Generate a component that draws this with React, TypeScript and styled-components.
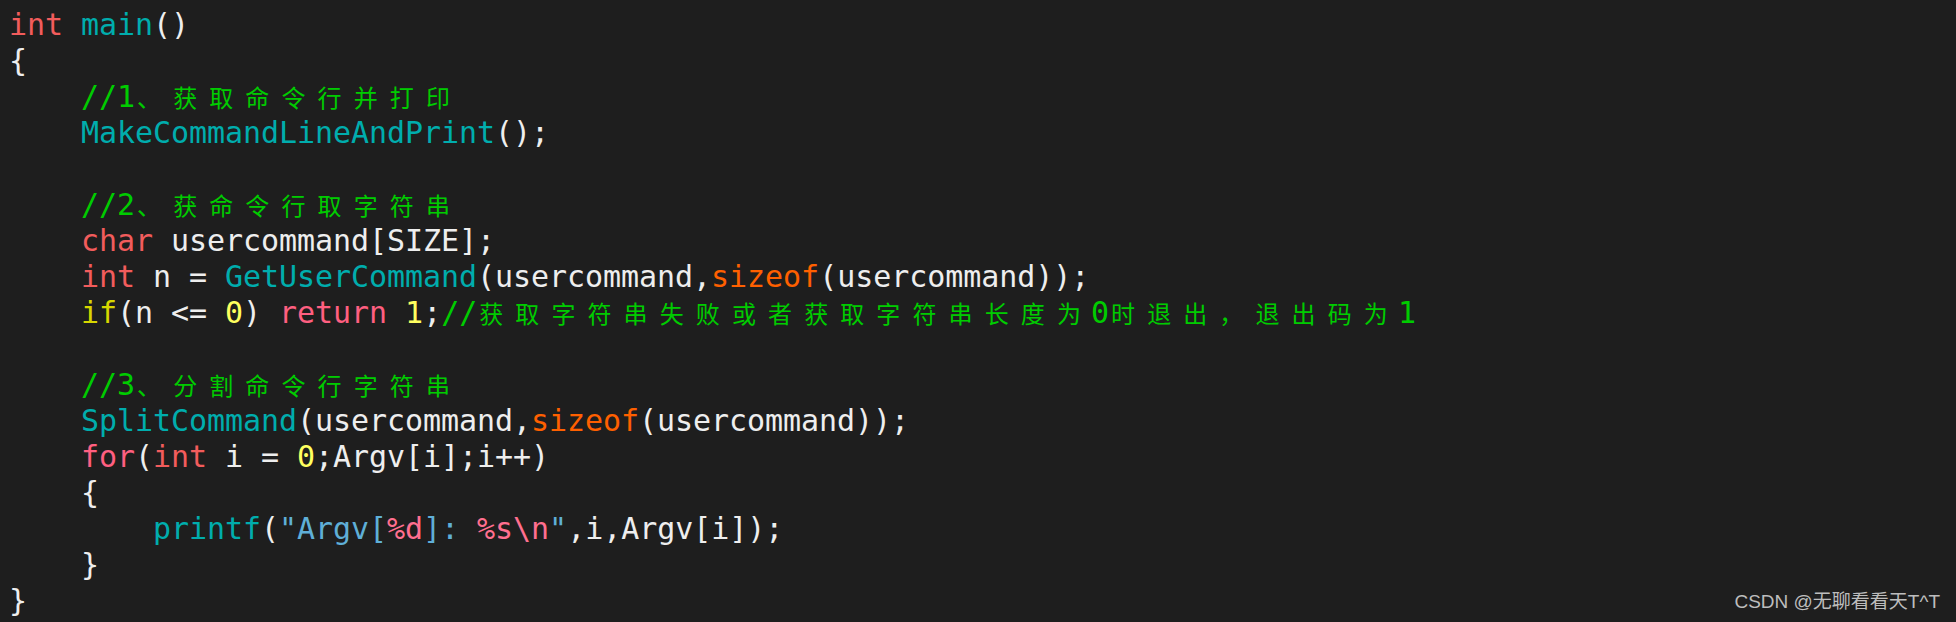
import React from "react";
import styled, { createGlobalStyle } from "styled-components";

const GlobalStyle = createGlobalStyle`
  html, body {
    margin: 0;
    padding: 0;
    background: #1e1e1e;
  }
`;

type Tone =
  | "kw"
  | "fn"
  | "tx"
  | "ctl"
  | "num"
  | "ret"
  | "op"
  | "cm"
  | "str"
  | "fmt";

const palette: Record<Tone, string> = {
  kw: "#f25c5c",
  fn: "#00adad",
  tx: "#eeeeee",
  ctl: "#d7d700",
  num: "#ffff5f",
  ret: "#ff5f80",
  op: "#ff6000",
  cm: "#00cc00",
  str: "#5fafd7",
  fmt: "#ff6f8f",
};

const Page = styled.div`
  position: relative;
  width: 1956px;
  height: 622px;
  overflow: hidden;
  background: #1e1e1e;
`;

const Code = styled.div`
  padding: 7px 0 0 9px;
  font-family: "DejaVu Sans Mono", "Noto Sans CJK SC", monospace;
  font-size: 30px;
  letter-spacing: -0.06px;
  white-space: pre;
`;

const Line = styled.div`
  height: 36px;
  line-height: 36px;
`;

const Token = styled.span<{ $tone: Tone }>`
  color: ${(p) => palette[p.$tone]};
`;

const Wide = styled.span`
  display: inline-block;
  width: 36.12px;
  box-sizing: border-box;
  padding-left: 2px;
  font-family: "Noto Sans CJK SC", sans-serif;
  font-size: 24px;
  letter-spacing: 0;
  vertical-align: baseline;
`;

const Watermark = styled.div`
  position: absolute;
  right: 16px;
  bottom: 10px;
  height: 20px;
  line-height: 20px;
  font-family: "Liberation Sans", "Noto Sans CJK SC", sans-serif;
  font-size: 19px;
  color: #bdbdbd;
`;

type Seg = [Tone, string];

const lines: Seg[][] = [
  [["kw", "int"], ["tx", " "], ["fn", "main"], ["tx", "()"]],
  [["tx", "{"]],
  [["tx", "    "], ["cm", "//1、获取命令行并打印"]],
  [["tx", "    "], ["fn", "MakeCommandLineAndPrint"], ["tx", "();"]],
  [],
  [["tx", "    "], ["cm", "//2、获命令行取字符串"]],
  [["tx", "    "], ["kw", "char"], ["tx", " usercommand[SIZE];"]],
  [
    ["tx", "    "],
    ["kw", "int"],
    ["tx", " n = "],
    ["fn", "GetUserCommand"],
    ["tx", "(usercommand,"],
    ["op", "sizeof"],
    ["tx", "(usercommand));"],
  ],
  [
    ["tx", "    "],
    ["ctl", "if"],
    ["tx", "(n <= "],
    ["num", "0"],
    ["tx", ") "],
    ["ret", "return"],
    ["tx", " "],
    ["num", "1"],
    ["tx", ";"],
    ["cm", "//获取字符串失败或者获取字符串长度为0时退出，退出码为1"],
  ],
  [],
  [["tx", "    "], ["cm", "//3、分割命令行字符串"]],
  [
    ["tx", "    "],
    ["fn", "SplitCommand"],
    ["tx", "(usercommand,"],
    ["op", "sizeof"],
    ["tx", "(usercommand));"],
  ],
  [
    ["tx", "    "],
    ["ret", "for"],
    ["tx", "("],
    ["kw", "int"],
    ["tx", " i = "],
    ["num", "0"],
    ["tx", ";Argv[i];i++)"],
  ],
  [["tx", "    {"]],
  [
    ["tx", "        "],
    ["fn", "printf"],
    ["tx", "("],
    ["str", "\"Argv["],
    ["fmt", "%d"],
    ["str", "]: "],
    ["fmt", "%s\\n"],
    ["str", "\""],
    ["tx", ",i,Argv[i]);"],
  ],
  [["tx", "    }"]],
  [["tx", "}"]],
];

const wideRe = /[\u3000-\u303f\u4e00-\u9fff\uff00-\uffef]/;

function renderText(text: string): React.ReactNode[] {
  const out: React.ReactNode[] = [];
  let buf = "";
  let k = 0;
  for (const ch of text) {
    if (wideRe.test(ch)) {
      if (buf) {
        out.push(buf);
        buf = "";
      }
      out.push(<Wide key={k++}>{ch}</Wide>);
    } else {
      buf += ch;
    }
  }
  if (buf) out.push(buf);
  return out;
}

export default function App() {
  return (
    <Page>
      <GlobalStyle />
      <Code>
        {lines.map((segs, i) => (
          <Line key={i}>
            {segs.map(([tone, text], j) => (
              <Token key={j} $tone={tone}>
                {renderText(text)}
              </Token>
            ))}
          </Line>
        ))}
      </Code>
      <Watermark>CSDN @无聊看看天T^T</Watermark>
    </Page>
  );
}
